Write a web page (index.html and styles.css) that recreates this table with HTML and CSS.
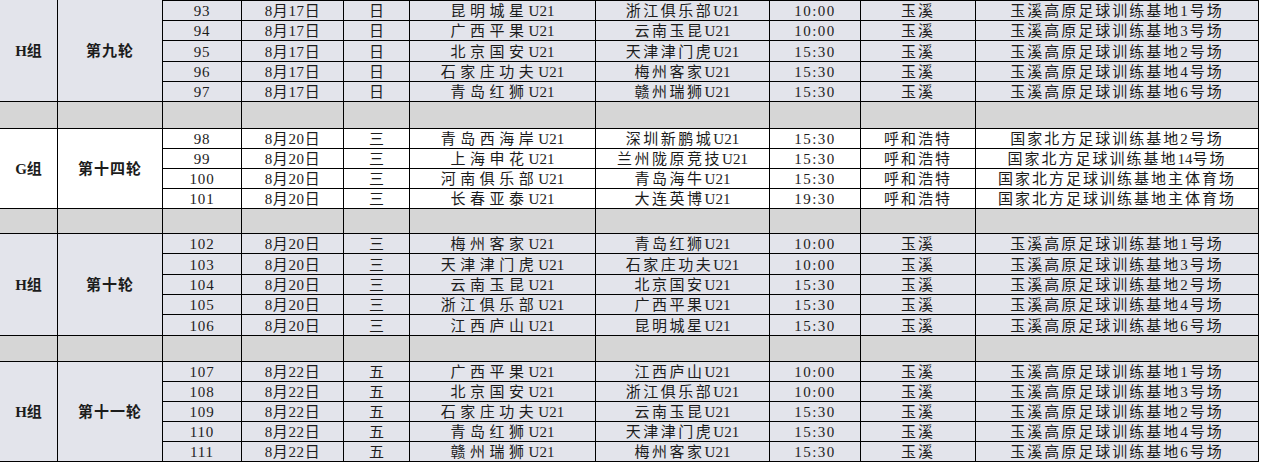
FILE: index.html
```html
<!DOCTYPE html>
<html lang="zh-CN">
<head>
<meta charset="utf-8">
<title>赛程表</title>
<link rel="stylesheet" href="styles.css">
</head>
<body>
<table class="sched">
  <colgroup>
    <col class="c1"><col class="c2"><col class="c3"><col class="c4"><col class="c5">
    <col class="c6"><col class="c7"><col class="c8"><col class="c9"><col class="c10">
  </colgroup>
  <tbody class="blue">
    <tr class="h21 first">
      <td rowspan="5" class="grp">H组</td><td rowspan="5" class="rnd">第九轮</td>
      <td class="no">93</td><td class="dt">8月17日</td><td>日</td><td class="t1">昆明城星<span class="u">U21</span></td><td class="t2">浙江俱乐部<span class="u">U21</span></td><td class="tm">10:00</td><td class="city">玉溪</td><td class="ven">玉溪高原足球训练基地1号场</td>
    </tr>
    <tr class="h20"><td class="no">94</td><td class="dt">8月17日</td><td>日</td><td class="t1">广西平果<span class="u">U21</span></td><td class="t2">云南玉昆<span class="u">U21</span></td><td class="tm">10:00</td><td class="city">玉溪</td><td class="ven">玉溪高原足球训练基地3号场</td></tr>
    <tr class="h21"><td class="no">95</td><td class="dt">8月17日</td><td>日</td><td class="t1">北京国安<span class="u">U21</span></td><td class="t2">天津津门虎<span class="u">U21</span></td><td class="tm">15:30</td><td class="city">玉溪</td><td class="ven">玉溪高原足球训练基地2号场</td></tr>
    <tr class="h20"><td class="no">96</td><td class="dt">8月17日</td><td>日</td><td class="t1">石家庄功夫<span class="u">U21</span></td><td class="t2">梅州客家<span class="u">U21</span></td><td class="tm">15:30</td><td class="city">玉溪</td><td class="ven">玉溪高原足球训练基地4号场</td></tr>
    <tr class="h20"><td class="no">97</td><td class="dt">8月17日</td><td>日</td><td class="t1">青岛红狮<span class="u">U21</span></td><td class="t2">赣州瑞狮<span class="u">U21</span></td><td class="tm">15:30</td><td class="city">玉溪</td><td class="ven">玉溪高原足球训练基地6号场</td></tr>
  </tbody>
  <tbody class="gap">
    <tr class="h27"><td></td><td></td><td></td><td></td><td></td><td></td><td></td><td></td><td></td><td></td></tr>
  </tbody>
  <tbody class="white">
    <tr class="h20">
      <td rowspan="4" class="grp">G组</td><td rowspan="4" class="rnd">第十四轮</td>
      <td class="no">98</td><td class="dt">8月20日</td><td>三</td><td class="t1">青岛西海岸<span class="u">U21</span></td><td class="t2">深圳新鹏城<span class="u">U21</span></td><td class="tm">15:30</td><td class="city">呼和浩特</td><td class="ven">国家北方足球训练基地2号场</td>
    </tr>
    <tr class="h20"><td class="no">99</td><td class="dt">8月20日</td><td>三</td><td class="t1">上海申花<span class="u">U21</span></td><td class="t2">兰州陇原竞技<span class="u">U21</span></td><td class="tm">15:30</td><td class="city">呼和浩特</td><td class="ven">国家北方足球训练基地<span class="n">14</span>号场</td></tr>
    <tr class="h20"><td class="no">100</td><td class="dt">8月20日</td><td>三</td><td class="t1">河南俱乐部<span class="u">U21</span></td><td class="t2">青岛海牛<span class="u">U21</span></td><td class="tm">15:30</td><td class="city">呼和浩特</td><td class="ven">国家北方足球训练基地主体育场</td></tr>
    <tr class="h20"><td class="no">101</td><td class="dt">8月20日</td><td>三</td><td class="t1">长春亚泰<span class="u">U21</span></td><td class="t2">大连英博<span class="u">U21</span></td><td class="tm">19:30</td><td class="city">呼和浩特</td><td class="ven">国家北方足球训练基地主体育场</td></tr>
  </tbody>
  <tbody class="gap">
    <tr class="h25"><td></td><td></td><td></td><td></td><td></td><td></td><td></td><td></td><td></td><td></td></tr>
  </tbody>
  <tbody class="blue">
    <tr class="h20">
      <td rowspan="5" class="grp">H组</td><td rowspan="5" class="rnd">第十轮</td>
      <td class="no">102</td><td class="dt">8月20日</td><td>三</td><td class="t1">梅州客家<span class="u">U21</span></td><td class="t2">青岛红狮<span class="u">U21</span></td><td class="tm">10:00</td><td class="city">玉溪</td><td class="ven">玉溪高原足球训练基地1号场</td>
    </tr>
    <tr class="h21"><td class="no">103</td><td class="dt">8月20日</td><td>三</td><td class="t1">天津津门虎<span class="u">U21</span></td><td class="t2">石家庄功夫<span class="u">U21</span></td><td class="tm">10:00</td><td class="city">玉溪</td><td class="ven">玉溪高原足球训练基地3号场</td></tr>
    <tr class="h20"><td class="no">104</td><td class="dt">8月20日</td><td>三</td><td class="t1">云南玉昆<span class="u">U21</span></td><td class="t2">北京国安<span class="u">U21</span></td><td class="tm">15:30</td><td class="city">玉溪</td><td class="ven">玉溪高原足球训练基地2号场</td></tr>
    <tr class="h20"><td class="no">105</td><td class="dt">8月20日</td><td>三</td><td class="t1">浙江俱乐部<span class="u">U21</span></td><td class="t2">广西平果<span class="u">U21</span></td><td class="tm">15:30</td><td class="city">玉溪</td><td class="ven">玉溪高原足球训练基地4号场</td></tr>
    <tr class="h21"><td class="no">106</td><td class="dt">8月20日</td><td>三</td><td class="t1">江西庐山<span class="u">U21</span></td><td class="t2">昆明城星<span class="u">U21</span></td><td class="tm">15:30</td><td class="city">玉溪</td><td class="ven">玉溪高原足球训练基地6号场</td></tr>
  </tbody>
  <tbody class="gap">
    <tr class="h26"><td></td><td></td><td></td><td></td><td></td><td></td><td></td><td></td><td></td><td></td></tr>
  </tbody>
  <tbody class="blue">
    <tr class="h20">
      <td rowspan="5" class="grp">H组</td><td rowspan="5" class="rnd">第十一轮</td>
      <td class="no">107</td><td class="dt">8月22日</td><td>五</td><td class="t1">广西平果<span class="u">U21</span></td><td class="t2">江西庐山<span class="u">U21</span></td><td class="tm">10:00</td><td class="city">玉溪</td><td class="ven">玉溪高原足球训练基地1号场</td>
    </tr>
    <tr class="h20"><td class="no">108</td><td class="dt">8月22日</td><td>五</td><td class="t1">北京国安<span class="u">U21</span></td><td class="t2">浙江俱乐部<span class="u">U21</span></td><td class="tm">10:00</td><td class="city">玉溪</td><td class="ven">玉溪高原足球训练基地3号场</td></tr>
    <tr class="h20"><td class="no">109</td><td class="dt">8月22日</td><td>五</td><td class="t1">石家庄功夫<span class="u">U21</span></td><td class="t2">云南玉昆<span class="u">U21</span></td><td class="tm">15:30</td><td class="city">玉溪</td><td class="ven">玉溪高原足球训练基地2号场</td></tr>
    <tr class="h20"><td class="no">110</td><td class="dt">8月22日</td><td>五</td><td class="t1">青岛红狮<span class="u">U21</span></td><td class="t2">天津津门虎<span class="u">U21</span></td><td class="tm">15:30</td><td class="city">玉溪</td><td class="ven">玉溪高原足球训练基地4号场</td></tr>
    <tr class="h20"><td class="no">111</td><td class="dt">8月22日</td><td>五</td><td class="t1">赣州瑞狮<span class="u">U21</span></td><td class="t2">梅州客家<span class="u">U21</span></td><td class="tm">15:30</td><td class="city">玉溪</td><td class="ven">玉溪高原足球训练基地6号场</td></tr>
  </tbody>
</table>
</body>
</html>
```

FILE: styles.css
```css
html, body {
  margin: 0;
  padding: 0;
  background: #ffffff;
}

body {
  font-family: "Liberation Serif", "Noto Sans CJK SC", serif;
  font-size: 15px;
  color: #1c1c1c;
}

.sched {
  border-collapse: separate;
  border-spacing: 0;
  table-layout: fixed;
  width: 1259px;
}

.c1 { width: 58px; }
.c2 { width: 105px; }
.c3 { width: 79px; }
.c4 { width: 102px; }
.c5 { width: 66px; }
.c6 { width: 186px; }
.c7 { width: 174px; }
.c8 { width: 91px; }
.c9 { width: 115px; }
.c10 { width: 283px; }

.sched td {
  box-sizing: border-box;
  padding: 2px 0 0 0;
  border-right: 1px solid #000;
  border-bottom: 1px solid #000;
  text-align: center;
  vertical-align: middle;
  line-height: 17px;
  white-space: nowrap;
  overflow: hidden;
}

.first td {
  border-top: 1px solid #000;
}

.first td.grp,
.first td.rnd {
  border-top: none;
}

.h20 { height: 20px; }
.h21 { height: 21px; }
.h25 { height: 25px; }
.h26 { height: 26px; }
.h27 { height: 27px; }

.blue td { background: #e3e4eb; }
.white td { background: #ffffff; }
.gap td { background: #d6d6d6; }

.grp,
.rnd {
  font-weight: bold;
  padding-top: 0;
}

.rnd { letter-spacing: 1px; }

.no { letter-spacing: 0.8px; padding-left: 1px; }
.tm { letter-spacing: 1.5px; padding-left: 2px; }
.dt { letter-spacing: 0.6px; }
.t1 { letter-spacing: 4.5px; }
.t2 { letter-spacing: 2.5px; }
.city { letter-spacing: 2px; }
.ven { letter-spacing: 2px; }

.u { letter-spacing: 0; }
.n { letter-spacing: 0; }
```
